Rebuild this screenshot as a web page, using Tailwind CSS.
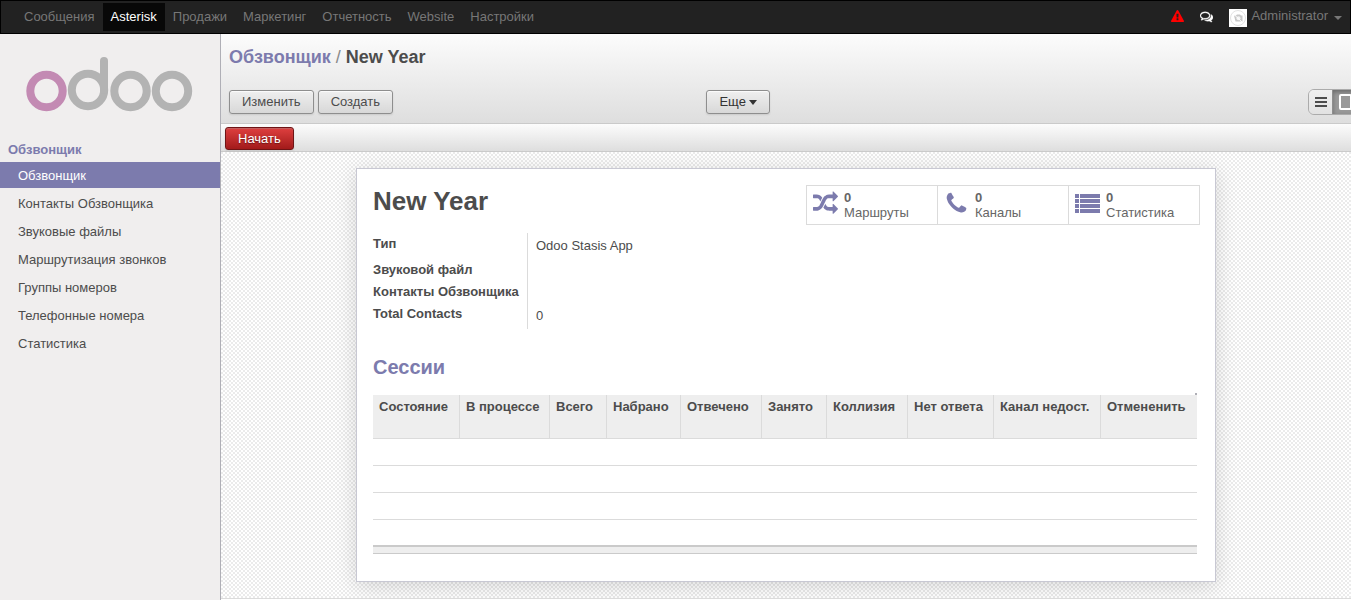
<!DOCTYPE html>
<html lang="ru">
<head>
<meta charset="utf-8">
<meta name="viewport" content="width=device-width, initial-scale=1">
<title>New Year - Odoo</title>
<script src="https://cdn.jsdelivr.net/npm/@tailwindcss/browser@4"></script>
</head>
<body class="flex min-h-screen flex-col overflow-x-hidden bg-white font-['Liberation_Sans',Arial,sans-serif] text-[13px] leading-[18px] text-[#4c4c4c]">

<header class="flex h-[34px] shrink-0 items-start justify-between border border-black bg-[#222] pt-[2px] text-[#777]">
  <nav class="flex pl-[15px]">
    <a href="#" class="h-7 px-2 leading-[27px]">Сообщения</a>
    <a href="#" class="h-7 bg-[#080808] px-2 leading-[27px] text-white">Asterisk</a>
    <a href="#" class="h-7 px-2 leading-[27px]">Продажи</a>
    <a href="#" class="h-7 px-2 leading-[27px]">Маркетинг</a>
    <a href="#" class="h-7 px-2 leading-[27px]">Отчетность</a>
    <a href="#" class="h-7 px-2 leading-[27px]">Website</a>
    <a href="#" class="h-7 px-2 leading-[27px]">Настройки</a>
  </nav>
  <div class="flex h-[26px] items-center pr-2">
    <a href="#" aria-label="Предупреждение" class="mr-4 text-[#f00]">
      <svg class="size-[13px]" viewBox="0 0 1792 1792" fill="currentColor"><path d="M1024 1375v-190q0-14-9.500-23.500t-22.500-9.500h-192q-13 0-22.500 9.500t-9.500 23.500v190q0 14 9.500 23.500t22.500 9.500h192q13 0 22.500-9.500t9.500-23.500zm-2-374l18-459q0-12-10-19-13-11-24-11h-220q-11 0-24 11-10 7-10 21l17 457q0 10 10 16.500t24 6.500h185q14 0 23.500-6.500t10.500-16.500zm-14-934l768 1408q35 63-2 126-17 29-46.500 46t-63.500 17h-1536q-34 0-63.500-17t-46.500-46q-37-63-2-126l768-1408q17-31 47-49t65-18 65 18 47 49z"/></svg>
    </a>
    <a href="#" aria-label="Написать сообщение" class="mr-4 text-white">
      <svg class="size-[13px]" viewBox="0 0 1792 1792" fill="currentColor" stroke="currentColor" stroke-width="50"><path d="M704 384q-153 0-286 52t-211.500 141-78.500 191q0 82 53 158t149 132l97 56-35 84q34-20 62-39l44-31 53 10q78 14 153 14 153 0 286-52t211.500-141 78.500-191-78.500-191-211.500-141-286-52zm0-128q191 0 353.500 68.500t256.500 186.500 94 257-94 257-256.500 186.500-353.500 68.500q-86 0-176-16-124 88-278 128-36 9-86 16h-3q-11 0-20.500-8t-11.500-21q-1-3-1-6.500t.5-6.500 2-6l2.500-5 3.500-5.500 4-5 4.500-5 4-4.500q5-6 23-25t26-29.500 22.500-29 25-38.500 20.500-44q-124-72-195-177t-71-224q0-139 94-257t256.500-186.500 353.500-68.500zm822 1169q10 24 20.500 44t25 38.500 22.500 29 26 29.500 23 25q1 1 4 4.500t4.500 5 4 5 3.500 5.500l2.500 5 2 6 .5 6.500-1 6.500q-3 14-13 22t-22 7q-50-7-86-16-154-40-278-128-90 16-176 16-271 0-472-132 58 4 88 4 161 0 309-45t264-129q125-92 192-212t67-254q0-77-23-152 129 71 204 178t75 230q0 120-71 224.500t-195 176.500z"/></svg>
    </a>
    <button type="button" class="flex h-[26px] items-center">
      <svg class="mt-1 mr-1 size-[18px] bg-white" viewBox="0 0 18 18" fill="none"><circle cx="9" cy="9" r="7.500" stroke="#e2e2e2"/><path d="M5 6.500h2l1-1h3l1 1h1.500v6h-7z" fill="#c8c8c8"/><circle cx="9.500" cy="9.300" r="2" fill="#f4f4f4"/><path d="M4.500 5l9 8.500" stroke="#fff"/></svg>
      <span>Administrator</span>
      <span class="mt-1 ml-[6px] border-x-4 border-t-4 border-x-transparent border-t-[#777]"></span>
    </button>
  </div>
</header>

<div class="flex flex-1">
  <aside class="w-[221px] shrink-0 border-r border-[#afafb6] bg-[#f0eeee]">
    <a href="#" aria-label="Odoo" class="block pt-[22px] pl-[25px]">
      <svg width="170" height="56" viewBox="0 0 170 56" fill="none" stroke-width="8">
        <circle cx="21.500" cy="35" r="16.200" stroke="#c38ab3"/>
        <g stroke="#b3b3b3"><circle cx="63" cy="34" r="16.200"/><path d="M79 34V5" stroke-linecap="round"/><circle cx="105.500" cy="35" r="16.200"/><circle cx="147" cy="35" r="16.200"/></g>
      </svg>
    </a>
    <nav class="pt-[29px]">
      <h2 class="px-2 pb-[3px] font-bold text-[#7c7bad]">Обзвонщик</h2>
      <ul class="flex flex-col gap-[2px] leading-[25px]">
        <li><a href="#" class="block bg-[#7c7bad] pt-px pl-[18px] text-white">Обзвонщик</a></li>
        <li><a href="#" class="block pt-px pl-[18px]">Контакты Обзвонщика</a></li>
        <li><a href="#" class="block pt-px pl-[18px]">Звуковые файлы</a></li>
        <li><a href="#" class="block pt-px pl-[18px]">Маршрутизация звонков</a></li>
        <li><a href="#" class="block pt-px pl-[18px]">Группы номеров</a></li>
        <li><a href="#" class="block pt-px pl-[18px]">Телефонные номера</a></li>
        <li><a href="#" class="block pt-px pl-[18px]">Статистика</a></li>
      </ul>
    </nav>
  </aside>

  <main class="flex min-w-0 flex-1 flex-col overflow-hidden">
    <div class="border-b border-[#cacaca] bg-linear-to-b from-[#fcfcfc] to-[#dedede] px-2 pt-[11px] pb-2">
      <div class="text-[18px] leading-6">
        <a href="#" class="font-bold text-[#7c7bad]">Обзвонщик</a>
        <span class="text-[#8a8a8a]">/</span>
        <span class="font-bold">New Year</span>
      </div>
      <div class="mt-5 grid grid-cols-[3fr_4fr] items-center">
        <div class="flex gap-1">
          <button type="button" class="h-6 rounded-[3px] border border-[#8e8e8e] bg-linear-to-b from-[#efefef] to-[#d8d8d8] px-3 shadow-[0_1px_2px_rgba(0,0,0,0.1),inset_0_1px_1px_rgba(255,255,255,0.8)]">Изменить</button>
          <button type="button" class="h-6 rounded-[3px] border border-[#8e8e8e] bg-linear-to-b from-[#efefef] to-[#d8d8d8] px-3 shadow-[0_1px_2px_rgba(0,0,0,0.1),inset_0_1px_1px_rgba(255,255,255,0.8)]">Создать</button>
        </div>
        <div class="flex items-center justify-between">
          <button type="button" class="flex h-6 items-center rounded-[3px] border border-[#8e8e8e] bg-linear-to-b from-[#efefef] to-[#d8d8d8] px-3 text-[#333] shadow-[0_1px_2px_rgba(0,0,0,0.1),inset_0_1px_1px_rgba(255,255,255,0.8)]">Еще<span class="ml-[3px] border-x-4 border-t-[5px] border-x-transparent border-t-[#333]"></span></button>
          <div class="-mr-[15px] flex h-[26px] overflow-hidden rounded-[6px] border border-[#ababab]">
            <button type="button" aria-label="Список" class="flex w-6 items-center justify-center border-r border-[#8e8e8e] bg-linear-to-b from-[#efefef] to-[#e2e2e2]">
              <svg width="12" height="10" fill="#4c4c4c"><path d="M0 0h12v2H0zM0 4h12v2H0zM0 8h12v2H0z"/></svg>
            </button>
            <button type="button" aria-label="Форма" class="flex w-6 items-center justify-center bg-[#999] shadow-[inset_0_2px_4px_rgba(0,0,0,0.3)]">
              <svg width="13" height="16" fill="none" stroke="#fff" stroke-width="2"><rect x="1" y="1" width="11" height="14" rx="1"/></svg>
            </button>
          </div>
        </div>
      </div>
    </div>

    <div class="flex border-b border-[#cacaca] bg-linear-to-b from-[#fcfcfc] to-[#dedede] px-1 pt-[3px] pb-px">
      <button type="button" class="h-[23px] rounded-[3px] border border-[#6f1415] bg-linear-to-b from-[#df3f3f] to-[#a21a1a] px-3 text-white shadow-[0_1px_2px_rgba(0,0,0,0.1),inset_0_1px_1px_rgba(155,155,155,0.4)] text-shadow-[0_1px_1px_rgba(0,0,0,0.4)]">Начать</button>
    </div>

    <div class="bg-[conic-gradient(#fff_25%,#ebebeb_0_50%,#fff_0_75%,#ebebeb_0)] bg-size-[4px_4px] px-4 py-4">
      <section class="mx-auto max-w-[860px] border border-[#c8c8d3] bg-white px-4 pt-4 pb-[27px] shadow-[0_4px_20px_rgba(0,0,0,0.15)]">
        <div class="flex items-start justify-between">
          <h1 class="text-[26px] leading-8 font-bold">New Year</h1>
          <div class="-mr-px flex border border-[#dbdbdb] text-left leading-[15px] text-[#666]">
            <button type="button" class="flex h-[38px] w-[131px] items-center border-r border-[#dbdbdb] pl-[6px] text-left">
              <svg class="mr-[6px] mb-[3px] size-[25px] text-[#7c7bad]" viewBox="0 0 1792 1792" fill="currentColor"><path d="M666 481q-60 92-137 273-22-45-37-72.500t-40.500-63.500-51-56.500-63-35-81.500-14.500h-224q-14 0-23-9t-9-23v-192q0-14 9-23t23-9h224q250 0 410 225zm1126 799q0 14-9 23l-320 320q-9 9-23 9-13 0-22.500-9.500t-9.500-22.500v-192q-32 0-85 .5t-81 1-73-1-71-5-64-10.500-63-18.500-58-28.500-59-40-55-53.500-56-69.500q59-93 136-273 22 45 37 72.500t40.500 63.500 51 56.500 63 35 81.500 14.500h256v-192q0-14 9-23t23-9q12 0 24 10l319 319q9 9 9 23zm0-896q0 14-9 23l-320 320q-9 9-23 9-13 0-22.500-9.500t-9.500-22.500v-192h-256q-48 0-87 15t-69 45-51 61.500-45 77.500q-32 62-78 171-29 66-49.500 111t-54 105-64 100-74 83-90 68.500-106.500 42-128 16.500h-224q-14 0-23-9t-9-23v-192q0-14 9-23t23-9h224q48 0 87-15t69-45 51-61.500 45-77.500q32-62 78-171 29-66 49.500-111t54-105 64-100 74-83 90-68.500 106.500-42 128-16.500h256v-192q0-14 9-23t23-9q12 0 24 10l319 319q9 9 9 23z"/></svg>
              <span><b class="block">0</b>Маршруты</span>
            </button>
            <button type="button" class="flex h-[38px] w-[131px] items-center border-r border-[#dbdbdb] pl-[6px] text-left">
              <svg class="mr-[6px] mb-[3px] size-[25px] text-[#7c7bad]" viewBox="0 0 1792 1792" fill="currentColor"><path d="M1600 1240q0 27-10 70.500t-21 68.500q-21 50-122 106-94 51-186 51-27 0-53-3.500t-57.500-12.500-47-14.500-55.500-20.500-49-18q-98-35-175-83-127-79-264-216t-216-264q-48-77-83-175-3-9-18-49t-20.500-55.500-14.500-47-12.500-57.500-3.500-53q0-92 51-186 56-101 106-122 25-11 68.500-21t70.500-10q14 0 21 3 18 6 53 76 11 19 30 54t35 63.500 31 53.500q3 4 17.500 25t21.500 35.500 7 28.500q0 20-28.500 50t-62 55-62 53-28.500 46q0 9 5 22.500t8.500 20.500 14 24 11.500 19q76 137 174 235t235 174q2 1 19 11.500t24 14 20.500 8.500 22.500 5q18 0 46-28.500t53-62 55-62 50-28.500q14 0 28.500 7t35.500 21.500 25 17.500q25 15 53.500 31t63.500 35 54 30q70 35 76 53 3 7 3 21z"/></svg>
              <span><b class="block">0</b>Каналы</span>
            </button>
            <button type="button" class="flex h-[38px] w-[130px] items-center pl-[6px] text-left">
              <svg class="mr-[6px] mb-[3px] size-[25px] text-[#7c7bad]" viewBox="0 0 25 25" fill="currentColor"><path d="M0 3h4v4H0zM5 3h20v4H5zM0 8h4v4H0zM5 8h20v4H5zM0 13h4v4H0zM5 13h20v4H5zM0 18h4v4H0zM5 18h20v4H5z"/></svg>
              <span><b class="block">0</b>Статистика</span>
            </button>
          </div>
        </div>

        <dl class="mt-2 grid grid-cols-[155px_1fr] grid-rows-[26px_22px_22px_26px]">
          <dt class="border-r border-[#dbdbdb] pt-[2px] font-bold whitespace-nowrap">Тип</dt><dd class="pt-1 pl-2">Odoo Stasis App</dd>
          <dt class="border-r border-[#dbdbdb] pt-[2px] font-bold whitespace-nowrap">Звуковой файл</dt><dd class="pl-2"></dd>
          <dt class="border-r border-[#dbdbdb] pt-[2px] font-bold whitespace-nowrap">Контакты Обзвонщика</dt><dd class="pl-2"></dd>
          <dt class="border-r border-[#dbdbdb] pt-[2px] font-bold whitespace-nowrap">Total Contacts</dt><dd class="pt-1 pl-2">0</dd>
        </dl>

        <h2 class="mt-[26px] text-[20px] leading-6 font-bold text-[#7c7bad]">Сессии</h2>

        <div class="mt-[14px] mr-[2px]">
          <div class="ml-auto size-[2px] bg-[#afafb6]"></div>
          <table class="w-full table-fixed border-separate border-spacing-0">
            <colgroup><col class="w-[87px]"><col class="w-[90px]"><col class="w-[57px]"><col class="w-[74px]"><col class="w-[81px]"><col class="w-[65px]"><col class="w-[81px]"><col class="w-[86px]"><col class="w-[107px]"><col></colgroup>
            <thead class="bg-[#eee] text-left whitespace-nowrap">
              <tr class="h-11">
                <th class="border-r border-b border-[#dbdbdb] px-[6px] pt-[3px] align-top">Состояние</th>
                <th class="border-r border-b border-[#dbdbdb] px-[6px] pt-[3px] align-top">В процессе</th>
                <th class="border-r border-b border-[#dbdbdb] px-[6px] pt-[3px] align-top">Всего</th>
                <th class="border-r border-b border-[#dbdbdb] px-[6px] pt-[3px] align-top">Набрано</th>
                <th class="border-r border-b border-[#dbdbdb] px-[6px] pt-[3px] align-top">Отвечено</th>
                <th class="border-r border-b border-[#dbdbdb] px-[6px] pt-[3px] align-top">Занято</th>
                <th class="border-r border-b border-[#dbdbdb] px-[6px] pt-[3px] align-top">Коллизия</th>
                <th class="border-r border-b border-[#dbdbdb] px-[6px] pt-[3px] align-top">Нет ответа</th>
                <th class="border-r border-b border-[#dbdbdb] px-[6px] pt-[3px] align-top">Канал недост.</th>
                <th class="border-b border-[#dbdbdb] px-[6px] pt-[3px] align-top">Отмененить</th>
              </tr>
            </thead>
            <tbody>
              <tr class="h-[27px]"><td colspan="10" class="border-b border-[#dbdbdb]"></td></tr>
              <tr class="h-[27px]"><td colspan="10" class="border-b border-[#dbdbdb]"></td></tr>
              <tr class="h-[27px]"><td colspan="10" class="border-b border-[#dbdbdb]"></td></tr>
              <tr class="h-[25px]"><td colspan="10"></td></tr>
            </tbody>
            <tfoot class="bg-[#eee]">
              <tr class="h-[9px]"><td colspan="10" class="border-t-2 border-b border-[#cacaca]"></td></tr>
            </tfoot>
          </table>
        </div>
      </section>
    </div>
    <div class="flex-1 border-t border-[#dbdbdb] bg-white"></div>
  </main>
</div>
</body>
</html>
